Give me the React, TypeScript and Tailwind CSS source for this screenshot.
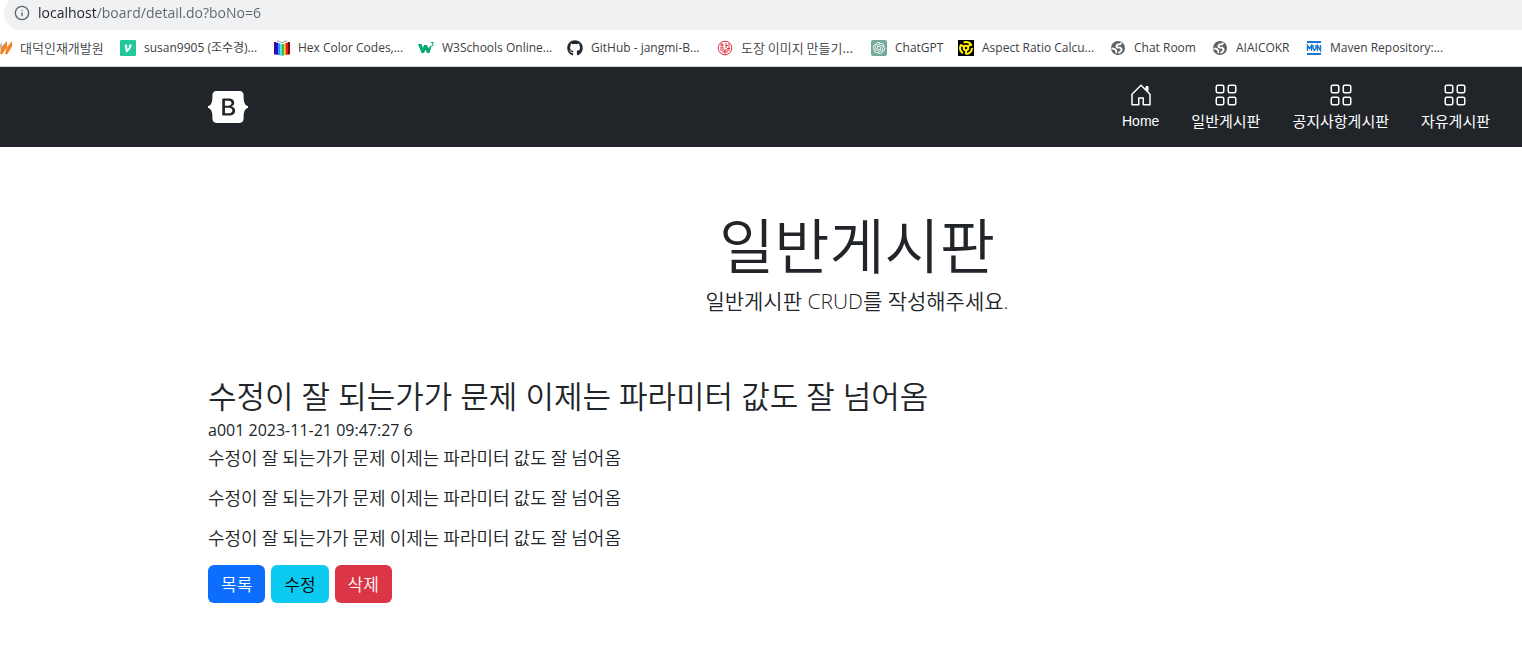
import type { ReactNode } from 'react';
import { BsGrid } from 'react-icons/bs';
import { FaGithub } from 'react-icons/fa';
import { SiOpenai } from 'react-icons/si';
import { Info } from 'lucide-react';

interface Bookmark {
  title: string;
  icon: ReactNode;
  korean?: boolean;
}

function GlobeIcon() {
  return (
    <svg viewBox="0 0 16 16" className="w-4 h-4">
      <circle cx="8" cy="8" r="7" fill="#5f6368" />
      <g fill="none" stroke="#fff" strokeWidth="1.800" strokeLinejoin="round">
        <path d="M11.500 2.800 9.800 4.400H7.600L6.200 6.200l1 1.400h3l1.500 1.700-1 2.200-2.200 1.600" />
        <path d="M1.600 8.400 4.600 9l1.800 1.800-.2 2.400" />
      </g>
    </svg>
  );
}

const bookmarks: Bookmark[] = [
  {
    title: '대덕인재개발원',
    korean: true,
    icon: (
      <svg viewBox="0 0 16 16" className="w-4 h-4">
        <path d="M0 11 6 2v5L2 13z" fill="#b4b8bc" />
        <path d="M4 13.500 5.500 7 11 1v6L6 14.500zM9 14l1.500-6L16 1v5.500l-5 8z" fill="#f58220" />
      </svg>
    ),
  },
  {
    title: 'susan9905 (조수경)...',
    icon: (
      <svg viewBox="0 0 16 16" className="w-4 h-4">
        <rect width="16" height="16" rx="1" fill="#20c997" />
        <path
          d="M4.300 5.200 6.900 4.200 7.600 9.500C8.700 8.200 9.400 6.800 8.800 4.900l2.600-.6c.7 2.600-1.400 5.600-4.400 7.900H6L4.900 6z"
          fill="#fff"
        />
      </svg>
    ),
  },
  {
    title: 'Hex Color Codes,...',
    icon: (
      <svg viewBox="0 0 16 16" className="w-4 h-4">
        <path d="M0 2h2v12.500H0z" fill="#3a0a8c" />
        <path d="M2 2.500l2.500.5v12L2 14.500z" fill="#1414e6" />
        <path d="m4.500 3 2 .7v11.800l-2-.5z" fill="#1e9bf0" />
        <path d="M6.500 3.700 8 4.500V16l-1.500-.5z" fill="#50e0e8" />
        <path d="m8 4.500 2-1V15l-2 1z" fill="#30c030" />
        <path d="m10 3.500 1.500-.5v12l-1.500.3z" fill="#f5e616" />
        <path d="M11.500 3 14 2.500v12l-2.500.5z" fill="#f01818" />
        <path d="M14 2h2v12.500h-2z" fill="#7a0808" />
        <path d="M3 1c2 0 4 .5 5 2 1-1.500 3-2 5-2" fill="none" stroke="#9a9a9a" />
      </svg>
    ),
  },
  {
    title: 'W3Schools Online...',
    icon: (
      <svg viewBox="0 0 16 16" className="w-4 h-4">
        <path
          d="M0 4h3.500l1.300 4L6 5h3l1.500 3.500L12 6l1.500.5L11.500 13H9L7.500 9.800 6 13H3.500z"
          fill="#04aa6d"
        />
        <path
          d="M13 2.500h2.300L14.200 4c1.300.1 1.300 1.900 0 2-.5 0-.9-.1-1.200-.4"
          fill="none"
          stroke="#04aa6d"
        />
      </svg>
    ),
  },
  { title: 'GitHub - jangmi-B...', icon: <FaGithub className="w-4 h-4 text-[#24292f]" /> },
  {
    title: '도장 이미지 만들기...',
    korean: true,
    icon: (
      <svg viewBox="0 0 16 16" className="w-4 h-4" fill="none" stroke="#d9363e">
        <circle cx="8" cy="8" r="6.800" />
        <path d="M3 5h4M5 3v5M3 8h4M9 3v5M9 5.500h2M12 3v5M3 10h10M5 12h6M8 10v4M10 8.500h3" />
      </svg>
    ),
  },
  {
    title: 'ChatGPT',
    icon: (
      <span className="flex w-4 h-4 items-center justify-center rounded-xs bg-[#74aa9c]">
        <SiOpenai className="w-3 h-3 text-white" />
      </span>
    ),
  },
  {
    title: 'Aspect Ratio Calcu...',
    icon: (
      <svg viewBox="0 0 16 16" className="w-4 h-4">
        <path d="M0 0h16v16H0z" fill="#000" />
        <g fill="none" stroke="#ffee00" strokeWidth="2">
          <circle cx="8" cy="8" r="6" strokeDasharray="9.500 3" />
          <circle cx="8" cy="8" r="2.200" />
          <path d="M2.500 5 6 6.500M13 4l-3 2.500M8 10v4" />
        </g>
      </svg>
    ),
  },
  { title: 'Chat Room', icon: <GlobeIcon /> },
  { title: 'AIAICOKR', icon: <GlobeIcon /> },
  {
    title: 'Maven Repository:...',
    icon: (
      <svg viewBox="0 0 16 16" className="w-4 h-4">
        <path d="M1 1h14v2H1zM1 13h14v2H1z" fill="#1976d2" />
        <path
          d="M1.500 11V5.500l2 3 2-3V11M7 5v3l1.500 2.500L10 8V5M11.500 11V5.500l3 5V5"
          fill="none"
          stroke="#1976d2"
          strokeWidth="1.400"
        />
      </svg>
    ),
  },
];

const navItems = [
  { label: 'Home', home: true },
  { label: '일반게시판', home: false },
  { label: '공지사항게시판', home: false },
  { label: '자유게시판', home: false },
];

const post = {
  title: '수정이 잘 되는가가 문제 이제는 파라미터 값도 잘 넘어옴',
  meta: 'a001 2023-11-21 09:47:27 6',
  body: [
    '수정이 잘 되는가가 문제 이제는 파라미터 값도 잘 넘어옴',
    '수정이 잘 되는가가 문제 이제는 파라미터 값도 잘 넘어옴',
    '수정이 잘 되는가가 문제 이제는 파라미터 값도 잘 넘어옴',
  ],
};

function HomeIcon() {
  return (
    <svg viewBox="0 0 16 16" className="w-6 h-6" fill="currentColor">
      <path d="M8.354 1.146a.5.5 0 0 0-.708 0l-6 6A.5.5 0 0 0 1.500 7.500v7a.5.5 0 0 0 .5.5h4.500a.5.5 0 0 0 .5-.5v-4h2v4a.5.5 0 0 0 .5.5H14a.5.5 0 0 0 .5-.5v-7a.5.5 0 0 0-.146-.354L13 5.793V2.500a.5.5 0 0 0-.5-.5h-1a.5.5 0 0 0-.5.5v1.293L8.354 1.146zM2.500 14V7.707l5.500-5.500 5.500 5.500V14H10v-4a.5.5 0 0 0-.5-.5h-3a.5.5 0 0 0-.5.5v4H2.500z" />
    </svg>
  );
}

function BootstrapLogo() {
  return (
    <svg viewBox="0 0 118 94" className="w-10 h-8" fill="currentColor" role="img" aria-label="Bootstrap">
      <path
        fillRule="evenodd"
        clipRule="evenodd"
        d="M24.509 0c-6.733 0-11.715 5.893-11.492 12.284.214 6.140-.064 14.092-2.066 20.577C8.943 39.365 5.547 43.485 0 44.014v5.972c5.547.529 8.943 4.649 10.951 11.153 2.002 6.485 2.280 14.437 2.066 20.577C12.794 88.106 17.776 94 24.510 94H93.500c6.733 0 11.714-5.893 11.491-12.284-.214-6.140.064-14.092 2.066-20.577 2.009-6.504 5.396-10.624 10.943-11.153v-5.972c-5.547-.529-8.934-4.649-10.943-11.153-2.002-6.484-2.280-14.437-2.066-20.577C105.214 5.894 100.233 0 93.500 0H24.508zM80 57.863C80 66.663 73.436 72 62.543 72H44a2 2 0 01-2-2V24a2 2 0 012-2h18.437c9.083 0 15.044 4.920 15.044 12.474 0 5.302-4.010 10.049-9.119 10.880v.277C75.317 46.394 80 51.210 80 57.863zM60.521 28.340H49.948v14.934h8.905c6.884 0 10.680-2.772 10.680-7.727 0-4.643-3.264-7.207-9.012-7.207zM49.948 49.200v16.458H60.910c7.167 0 10.964-2.876 10.964-8.281 0-5.406-3.903-8.178-11.425-8.178H49.948z"
      />
    </svg>
  );
}

export default function App() {
  return (
    <div className="min-h-screen w-full overflow-hidden bg-white text-[#212529] font-['Open_Sans','Noto_Sans_CJK_KR',sans-serif]">
      <div className="overflow-hidden pl-1">
        <label className="-mt-1 flex h-[34px] items-center gap-2 rounded-l-full bg-[#eff1f3] pl-2.5">
          <Info className="w-4 h-4 text-[#5f6368]" aria-label="Site information" />
          <input
            type="text"
            aria-label="Address"
            defaultValue="localhost/board/detail.do?boNo=6"
            className="flex-1 bg-[linear-gradient(to_right,#202124_58px,#5f6368_58px)] bg-clip-text text-sm text-transparent outline-none"
          />
        </label>
      </div>

      <nav
        aria-label="Bookmarks"
        className="-ml-1 grid h-[37px] grid-cols-[124px_154px_144px_149px_150px_154px_87px_152px_102px_94px_1fr] items-center border-b border-[#d5d7da] text-xs text-[#3c4043]"
      >
        {bookmarks.map((bookmark) => (
          <a
            key={bookmark.title}
            href="#"
            className={`flex items-center gap-2 whitespace-nowrap ${
              bookmark.korean ? "font-['Noto_Sans_CJK_KR',sans-serif] text-[13px] font-[350]" : ''
            }`}
          >
            {bookmark.icon}
            {bookmark.title}
          </a>
        ))}
      </nav>

      <header className="flex h-20 items-center justify-between bg-[#212529] pl-52 pr-4 text-white">
        <a href="#">
          <BootstrapLogo />
        </a>
        <nav className="flex">
          {navItems.map((item) => (
            <a
              key={item.label}
              href="#"
              className={`flex flex-col items-center gap-1 px-4 ${
                item.home ? "font-['Liberation_Sans',sans-serif] text-sm leading-5" : 'text-[15px] leading-5'
              }`}
            >
              {item.home ? <HomeIcon /> : <BsGrid className="w-6 h-6" />}
              {item.label}
            </a>
          ))}
        </nav>
      </header>

      <main className="pl-52 pr-4 pt-[62px] font-['Noto_Sans_CJK_KR',sans-serif] font-[350]">
        <div className="text-center">
          <h1 className="text-6xl leading-[68px]">일반게시판</h1>
          <p className="mt-2 font-['Open_Sans','Noto_Sans_CJK_KR',sans-serif] text-[21px] leading-8">
            일반게시판 CRUD를 작성해주세요.
          </p>
        </div>

        <article className="mt-15">
          <h2 className="mb-0.5 font-['Open_Sans','Noto_Sans_CJK_KR',sans-serif] text-[31px] leading-[38px]">
            {post.title}
          </h2>
          <p className="font-['Open_Sans',sans-serif] text-base leading-[26px] font-normal">{post.meta}</p>
          <div className="mt-0.5 flex flex-col gap-4 text-lg leading-6">
            {post.body.map((line, index) => (
              <p key={index}>{line}</p>
            ))}
          </div>
          <div className="mt-4 flex gap-1.5 text-[17px]">
            <button className="h-[38px] rounded-md bg-[#0d6efd] px-[13px] text-white">목록</button>
            <button className="h-[38px] rounded-md bg-[#0dcaf0] px-[13px] text-black">수정</button>
            <button className="h-[38px] rounded-md bg-[#dc3545] px-[13px] text-white">삭제</button>
          </div>
        </article>
      </main>
    </div>
  );
}
